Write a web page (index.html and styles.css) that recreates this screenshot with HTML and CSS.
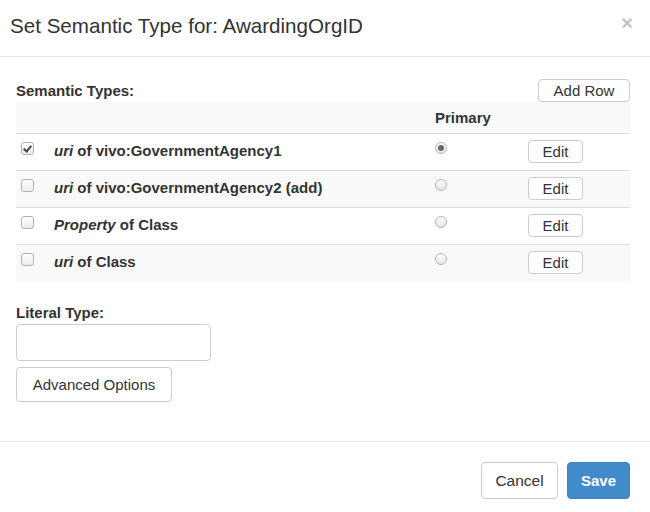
FILE: index.html
```html
<!DOCTYPE html>
<html>
<head>
<meta charset="utf-8">
<link rel="stylesheet" href="styles.css">
</head>
<body>
<div class="modal">
  <div class="modal-header">
    <h4 class="modal-title">Set Semantic Type for: AwardingOrgID</h4>
    <span class="close">×</span>
  </div>
  <div class="modal-body">
    <div class="types-bar">
      <span class="label">Semantic Types:</span>
      <button class="btn btn-add">Add Row</button>
    </div>
    <table class="types">
      <colgroup><col class="c1"><col class="c2"><col class="c3"></colgroup>
      <tr class="head"><th></th><th>Primary</th><th></th></tr>
      <tr>
        <td><div class="cell"><span class="check on"></span><span class="name"><i>uri</i> of vivo:GovernmentAgency1</span></div></td>
        <td><span class="radio on"></span></td>
        <td><button class="btn btn-edit">Edit</button></td>
      </tr>
      <tr class="alt">
        <td><div class="cell"><span class="check"></span><span class="name"><i>uri</i> of vivo:GovernmentAgency2 (add)</span></div></td>
        <td><span class="radio"></span></td>
        <td><button class="btn btn-edit">Edit</button></td>
      </tr>
      <tr>
        <td><div class="cell"><span class="check"></span><span class="name"><i>Property</i> of Class</span></div></td>
        <td><span class="radio"></span></td>
        <td><button class="btn btn-edit">Edit</button></td>
      </tr>
      <tr class="alt">
        <td><div class="cell"><span class="check"></span><span class="name"><i>uri</i> of Class</span></div></td>
        <td><span class="radio"></span></td>
        <td><button class="btn btn-edit">Edit</button></td>
      </tr>
    </table>
    <div class="literal">
      <label class="label">Literal Type:</label>
      <input class="text-input" type="text">
      <button class="btn btn-adv">Advanced Options</button>
    </div>
  </div>
  <div class="modal-footer">
    <button class="btn btn-cancel">Cancel</button>
    <button class="btn btn-save">Save</button>
  </div>
</div>
</body>
</html>
```
FILE: styles.css
```css
* { box-sizing: border-box; }
html, body { margin: 0; padding: 0; background: #fff; }
body {
  font-family: "Liberation Sans", Arial, Helvetica, sans-serif;
  font-size: 15px;
  color: #333;
  width: 650px;
  height: 512px;
  overflow: hidden;
}
.modal { width: 650px; }
.modal-header {
  display: flex;
  align-items: flex-start;
  padding: 13px 17px 17px 10px;
  border-bottom: 1px solid #e5e5e5;
}
.modal-title {
  margin: 0;
  font-size: 20.6px;
  font-weight: normal;
  line-height: 26px;
  color: #333;
}
.close {
  margin-left: auto;
  font-size: 20px;
  font-weight: bold;
  line-height: 18px;
  margin-top: 1px;
  color: #c3c3c3;
}
.modal-body { padding: 22px 20px 39px 16px; }
.types-bar {
  display: flex;
  justify-content: space-between;
  align-items: center;
  height: 23px;
}
.label { font-weight: bold; font-size: 15px; }
.btn {
  font-family: "Liberation Sans", Arial, Helvetica, sans-serif;
  font-size: 15px;
  color: #333;
  background: #fff;
  border: 1px solid #ccc;
  border-radius: 4px;
  padding: 0;
  margin: 0;
  line-height: 1;
}
.btn-add { width: 92px; height: 23px; }
.types {
  width: 614px;
  border-collapse: collapse;
  table-layout: fixed;
}
.c1 { width: 411px; }
.c2 { width: 93px; }
.c3 { width: 110px; }
.types th {
  height: 31px;
  padding: 0 8px;
  text-align: left;
  font-weight: bold;
  vertical-align: middle;
}
.types .head { background: #f9f9f9; }
.types .alt { background: #f9f9f9; }
.types td {
  height: 37px;
  border-top: 1px solid #ddd;
  padding: 0 8px;
  vertical-align: middle;
}
.types td:first-child { padding-left: 5px; }
.cell { display: flex; align-items: center; font-weight: bold; padding-bottom: 3px; }
.name i { font-style: italic; }
.check {
  position: relative;
  width: 13px;
  height: 13px;
  border: 1px solid #b3b3b3;
  border-radius: 3px;
  background: linear-gradient(#fefefe, #ececec);
  margin-right: 20px;
  margin-bottom: 3px;
  flex: none;
}
.check.on::after {
  content: "";
  position: absolute;
  left: 3px;
  top: 1px;
  width: 3px;
  height: 6px;
  border: solid #444;
  border-width: 0 2px 2px 0;
  transform: rotate(40deg);
}
.radio {
  display: block;
  position: relative;
  width: 12px;
  height: 12px;
  border-radius: 50%;
  border: 1px solid #b3b3b3;
  background: linear-gradient(#fefefe, #e6e6e6);
  margin-bottom: 7px;
}
.radio.on::after {
  content: "";
  position: absolute;
  left: 2px;
  top: 2px;
  width: 6px;
  height: 6px;
  border-radius: 50%;
  background: #666;
}
.btn-edit { width: 55px; height: 23px; }
.literal {
  display: flex;
  flex-direction: column;
  align-items: flex-start;
  margin-top: 22px;
}
.literal .label { line-height: 20px; }
.text-input {
  margin-top: 1px;
  width: 195px;
  height: 37px;
  border: 1px solid #ccc;
  border-radius: 4px;
  background: #fff;
  padding: 0 8px;
  font-size: 15px;
}
.btn-adv { margin-top: 6px; width: 156px; height: 35px; }
.modal-footer {
  display: flex;
  justify-content: flex-end;
  gap: 9px;
  padding: 20px 20px 15px;
  border-top: 1px solid #e5e5e5;
}
.btn-cancel { width: 77px; height: 37px; font-size: 15.5px; }
.btn-save {
  width: 63px;
  height: 37px;
  background: #428bca;
  border-color: #3b83c3;
  color: #fff;
  font-weight: bold;
}
```
